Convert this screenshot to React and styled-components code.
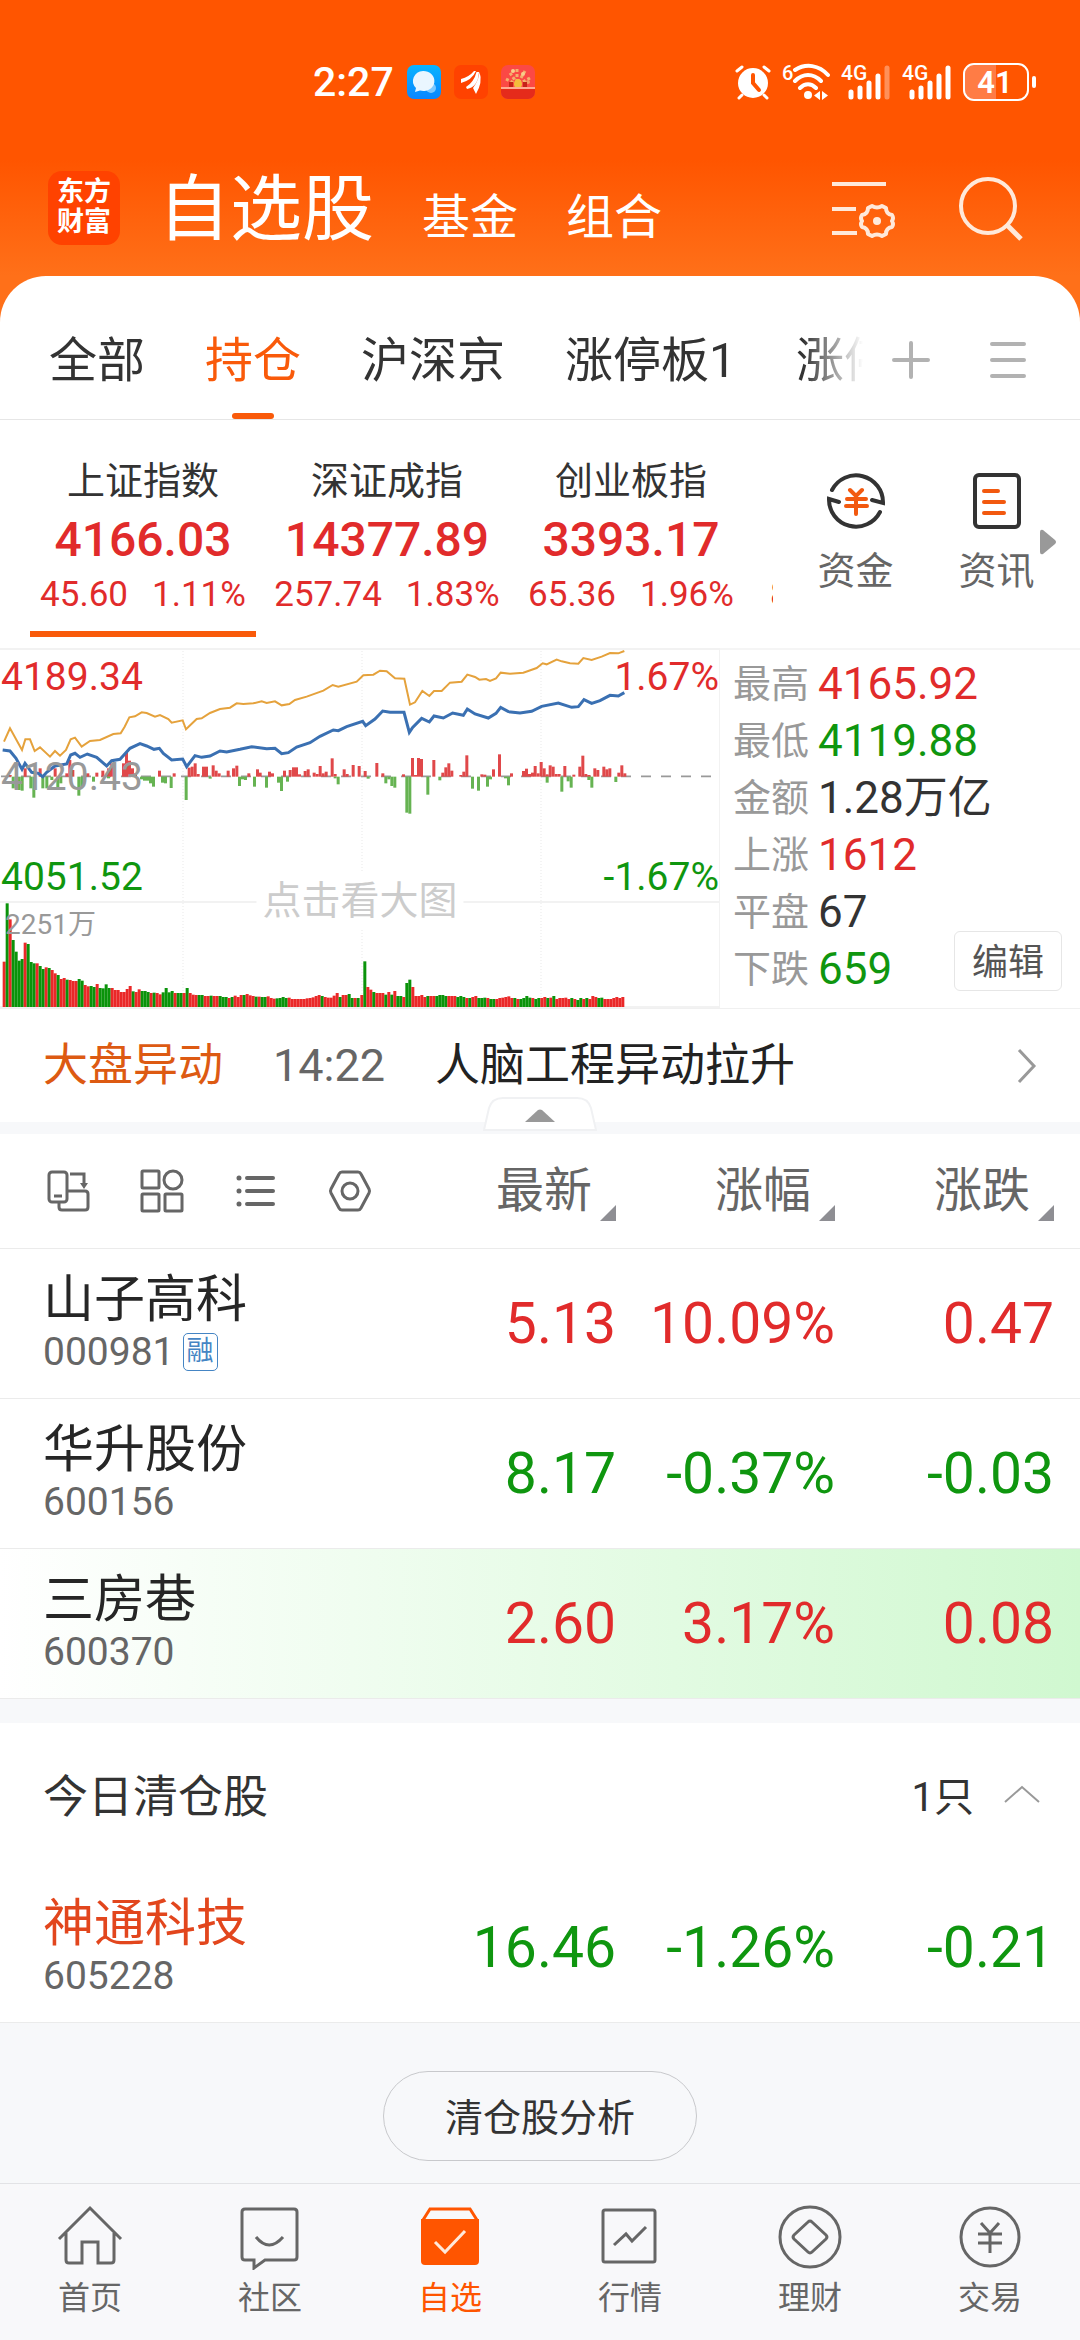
import React from "react";
import styled, { createGlobalStyle } from "styled-components";

const red = "#e12b2b";
const green = "#0f960f";
const orange = "#f95a0a";

const GlobalStyle = createGlobalStyle`
  * { box-sizing: border-box; }
  body {
    margin: 0;
    background: #f7f8fa;
    color: #333;
    font-family: Roboto, "Noto Sans CJK SC", sans-serif;
  }
  button {
    padding: 0;
    border: 0;
    background: none;
    color: inherit;
    font: inherit;
    cursor: pointer;
  }
  a { color: inherit; text-decoration: none; }
  svg { display: block; flex: none; }
`;

const tone = ({ $tone }) => ({ up: red, down: green }[$tone] || "#333");

const Page = styled.div`
  display: flex;
  flex-direction: column;
  min-height: 100vh;
`;

/* header */

const Header = styled.header`
  background: linear-gradient(#ff5500 160px, #ff7019 276px);
`;

const StatusBar = styled.div`
  display: flex;
  align-items: center;
  justify-content: space-between;
  padding: 56px 43px 0 313px;
  height: 108px;
  color: #fff;
`;

const StatusGroup = styled.div`
  display: flex;
  align-items: center;
  gap: ${({ $gap }) => $gap}px;
`;

const Clock = styled.span`
  font-size: 41px;
  font-weight: 500;
  line-height: 48px;
`;

const TitleBar = styled.div`
  display: flex;
  align-items: center;
  height: 168px;
  padding: 32px 56px 0 48px;
  color: #fff;
`;

const Logo = styled.div`
  width: 72px;
  height: 74px;
  padding: 6px 0;
  border-radius: 14px;
  background: #ff4200;
  font-size: 27px;
  font-weight: 700;
  line-height: 30px;
  text-align: center;
`;

const Titles = styled.nav`
  display: flex;
  flex: 1;
  align-items: baseline;
  gap: 48px;
  margin-left: 38px;
  padding-top: 12px;
`;

const Title = styled.a`
  font-size: ${({ $main }) => ($main ? 72 : 48)}px;
  line-height: 80px;
`;

const HeaderActions = styled.div`
  display: flex;
  gap: 62px;
`;

/* sheet */

const Sheet = styled.main`
  background: #ff7019;
`;

const Tabs = styled.nav`
  display: flex;
  align-items: center;
  height: 144px;
  padding-right: 52px;
  border-bottom: 1px solid #e6e6e6;
  border-radius: 46px 46px 0 0;
  background: #fff;
`;

const TabScroller = styled.div`
  display: flex;
  flex: 1;
  gap: 60px;
  min-width: 0;
  height: 100%;
  padding-left: 49px;
  overflow: hidden;
  mask-image: linear-gradient(to left, transparent, #000 60px);
`;

const Tab = styled.a`
  display: flex;
  flex: none;
  flex-direction: column;
  align-items: center;
  justify-content: space-between;
  padding-top: 55px;
  color: ${({ $active }) => ($active ? orange : "#333")};
  font-size: 48px;
  line-height: 60px;

  &::after {
    width: 42px;
    height: 6px;
    border-radius: 3px;
    background: ${({ $active }) => ($active ? orange : "transparent")};
    content: "";
  }
`;

const TabTools = styled.div`
  display: flex;
  flex: none;
  gap: 57px;
  padding: 24px 0 0 28px;
`;

const IndexBar = styled.section`
  display: flex;
  height: 228px;
  background: #fff;
`;

const IndexList = styled.div`
  display: flex;
  flex: 1;
  gap: 18px;
  min-width: 0;
  padding-left: 30px;
  overflow: hidden;
`;

const IndexItem = styled.button`
  display: flex;
  flex: 0 0 226px;
  flex-direction: column;
  align-items: center;
  min-width: 0;
  height: 217px;
  padding-top: 35px;
  border-bottom: 6px solid ${({ $active }) => ($active ? orange : "transparent")};
  white-space: nowrap;
`;

const IndexName = styled.span`
  font-size: 38px;
  line-height: 52px;
`;

const IndexValue = styled.span`
  color: ${tone};
  font-size: 48px;
  font-weight: 500;
  line-height: 66px;
`;

const IndexDiff = styled.span`
  display: flex;
  gap: 24px;
  color: ${tone};
  font-size: 35px;
  line-height: 44px;
`;

const NextDiff = styled(IndexDiff)`
  align-self: flex-start;
  padding: 118px 0 0 8px;
`;

const Shortcuts = styled.div`
  display: flex;
  flex: 0 0 306px;
  align-items: flex-start;
  padding: 50px 24px 0 12px;
`;

const Shortcut = styled.button`
  display: flex;
  flex: 0 0 141px;
  flex-direction: column;
  align-items: center;
  color: #666;
  font-size: 38px;
  line-height: 48px;
  gap: 15px;
`;

const More = styled.svg`
  margin: 59px 0 0 -27px;
`;

/* chart */

const Market = styled.section`
  display: grid;
  grid-template-columns: 2fr 1fr;
  border-bottom: 1px solid #f0f0f0;
  background: #fff;
`;

const ChartBox = styled.div`
  position: relative;
`;

const ChartLabel = styled.span`
  position: absolute;
  top: ${({ $top }) => $top}px;
  ${({ $side }) => $side || "left"}: 1px;
  color: ${({ $color }) => $color};
  font-size: 39px;
  line-height: 48px;
`;

const VolumeLabel = styled(ChartLabel)`
  padding-left: 4px;
  font-size: 28px;
`;

const Hint = styled.span`
  position: absolute;
  top: 225px;
  left: 50%;
  padding: 0 6px;
  background: #fff;
  color: #ccc;
  font-size: 39px;
  line-height: 56px;
  white-space: nowrap;
  transform: translateX(-50%);
`;

const Stats = styled.div`
  position: relative;
  padding: 6px 0 0 13px;
  border-top: 2px solid #f5f5f5;
`;

const StatList = styled.dl`
  margin: 0;
`;

const Stat = styled.div`
  display: flex;
  align-items: center;
  gap: 9px;
  line-height: 57px;

  dt {
    color: #999;
    font-size: 38px;
  }

  dd {
    margin: 0;
    color: ${tone};
    font-size: 44px;
  }
`;

const EditButton = styled.button`
  position: absolute;
  right: 18px;
  bottom: 17px;
  width: 108px;
  height: 60px;
  padding-bottom: 4px;
  border: 1px solid #e6e6e6;
  border-radius: 6px;
  background: #fff;
  color: #555;
  font-size: 36px;
`;

const News = styled.a`
  display: flex;
  align-items: center;
  height: 125px;
  padding: 0 43px;
  border-bottom: 12px solid #f7f8fa;
  background: #fff;
  color: #222;
  font-size: 45px;
  line-height: 60px;

  b {
    color: #dd5a12;
    font-weight: 400;
  }

  time {
    margin: 0 50px;
    color: #666;
  }

  svg {
    margin-left: auto;
  }
`;

const CollapseBar = styled.div`
  position: relative;
  display: flex;
  justify-content: center;
  height: 0;
`;

const Collapse = styled.button`
  position: absolute;
  bottom: 1px;
`;

/* watch list */

const Table = styled.table`
  width: 100%;
  border-collapse: collapse;
  background: #fff;
  table-layout: fixed;

  th, td {
    height: 150px;
    padding: 0 26px 0 0;
    border-bottom: 1px solid #ebebeb;
    font-weight: 400;
    text-align: right;
    white-space: nowrap;
  }

  th:first-child {
    padding-left: 43px;
    text-align: left;
  }

  thead th {
    height: 114px;
    color: #666;
    font-size: 48px;
    line-height: 60px;
  }
`;

const Column = styled.col`
  width: 219px;
`;

const Row = styled.tr`
  background: ${({ $hot }) => ($hot ? "linear-gradient(to right, #fff, #e8fce8 50%, #d0f8d0)" : "none")};
`;

const ViewTools = styled.div`
  display: flex;
  gap: 50px;
  padding-left: 3px;
`;

const SortButton = styled.button`
  display: inline-flex;
  align-items: flex-end;
  gap: 8px;
`;

const StockName = styled.div`
  color: ${({ $sold }) => ($sold ? "#e2461d" : "#262626")};
  font-size: 51px;
  line-height: 58px;
`;

const StockCode = styled.div`
  display: flex;
  align-items: center;
  gap: 8px;
  color: #666;
  font-size: 39px;
  line-height: 46px;
`;

const Badge = styled.span`
  width: 35px;
  height: 38px;
  border: 1px solid #4585c4;
  border-radius: 5px;
  color: #4585c4;
  font-size: 27px;
  line-height: 34px;
  text-align: center;
`;

const Num = styled.td`
  color: ${tone};
  font-size: 57px;
`;

const SoldHeader = styled.div`
  display: flex;
  align-items: center;
  justify-content: space-between;
  height: 174px;
  padding: 0 40px 8px 43px;
  border-top: 24px solid #f7f8fa;
  background: #fff;
`;

const SoldTitle = styled.h2`
  margin: 0;
  font-size: 45px;
  font-weight: 400;
`;

const Toggle = styled.button`
  display: flex;
  align-items: center;
  gap: 30px;
  font-size: 40px;
`;

const Footer = styled.div`
  display: flex;
  justify-content: center;
  padding: 48px 0 22px;
`;

const AnalyseButton = styled.button`
  width: 314px;
  height: 90px;
  padding-bottom: 4px;
  border: 1px solid #c8c9cc;
  border-radius: 45px;
  color: #333;
  font-size: 38px;
`;

const BottomNav = styled.nav`
  display: grid;
  grid-template-columns: repeat(6, 1fr);
  height: 157px;
  margin-top: auto;
  padding-top: 20px;
  border-top: 1px solid #e2e3e6;
  background: #f8f8fa;
`;

const NavItem = styled.a`
  display: flex;
  flex-direction: column;
  align-items: center;
  gap: 6px;
  color: ${({ $active }) => ($active ? "#ff5500" : "#666")};
  font-size: 32px;
  line-height: 44px;
`;

/* icons */

const MessageIcon = () => (
  <svg width="34" height="34" viewBox="0 0 34 34">
    <defs>
      <linearGradient id="msg" x2="0" y2="1">
        <stop stopColor="#08b4ff" />
        <stop offset="1" stopColor="#0a86ff" />
      </linearGradient>
    </defs>
    <rect width="34" height="34" rx="7" fill="url(#msg)" />
    <circle cx="24" cy="23" r="5" fill="#7cc8ff" />
    <path d="M16 6a11 10 0 1 1-3 19.500l-5 1.500 1-4A10.500 10 0 0 1 16 6z" fill="#eaf6ff" />
  </svg>
);

const WingIcon = () => (
  <svg width="34" height="34" viewBox="0 0 34 34">
    <rect width="34" height="34" rx="7" fill="#ff4200" />
    <path
      d="M7 14Q15 12 20 6l2 0Q18 15 7 18zM12 22Q20 17 22.500 7l2.500 0Q24 22 13 24zM19 23Q25 15 25.500 7Q29 17 22 29z"
      fill="#fff"
    />
  </svg>
);

const GiftIcon = () => (
  <svg width="34" height="34" viewBox="0 0 34 34">
    <rect width="34" height="34" rx="7" fill="#fb4945" />
    <path d="M9 8l7 10M24 6l-7 12M5 14l10 5M29 13l-11 6M16 4v12" stroke="#f3b06d" strokeWidth="3" strokeDasharray="3 2" />
    <circle cx="12" cy="6" r="2" fill="#f8cf8b" />
    <circle cx="22" cy="9" r="2" fill="#f8cf8b" />
    <circle cx="27" cy="17" r="2" fill="#f39a66" />
    <path d="M8 17h4v6H8zM22 17h4v6h-4z" fill="#c52318" />
    <ellipse cx="17" cy="19" rx="4" ry="5" fill="#f4bd3c" />
    <path d="M0 23h34v4a7 7 0 0 1-7 7H7a7 7 0 0 1-7-7z" fill="#e52b1b" />
    <path d="M0 22h34v2H0z" fill="#ffab91" />
  </svg>
);

const AlarmIcon = () => (
  <svg width="36" height="36" viewBox="0 0 36 36" fill="none" stroke="#fff" strokeLinecap="round">
    <circle cx="18" cy="19" r="15" fill="#fff" stroke="none" />
    <path d="M2 7l5-4M34 7l-5-4M7 31l-3 3M29 31l3 3" strokeWidth="3" />
    <path d="M18 11v8l6 7" stroke="#ff5500" strokeWidth="4" />
  </svg>
);

const WifiIcon = () => (
  <svg width="48" height="38" viewBox="0 0 48 38" fill="none" stroke="#fff" strokeWidth="4" strokeLinecap="round">
    <text x="0" y="17" fill="#fff" stroke="none" fontSize="20" fontWeight="500">6</text>
    <path d="M13 7c11-7 24-5 33 5M13 18c8-8 18-8 26 0M18 25c5-5 11-5 16 0" />
    <circle cx="26" cy="32" r="4" fill="#fff" stroke="none" />
    <path d="M38 28v9l-6-4.500zM40 28v9l6-4.500z" fill="#fff" stroke="none" />
  </svg>
);

const SignalIcon = ({ level }) => (
  <svg width="50" height="38" viewBox="0 0 50 38" stroke="#fff" strokeWidth="5" strokeLinecap="round">
    <text x="0" y="17" fill="#fff" stroke="none" fontSize="21" fontWeight="500">4G</text>
    {[29, 25, 20, 13, 5].map((y, i) => (
      <path key={y} d={`M${10 + i * 9} ${y}V34`} opacity={i < level ? 1 : 0.35} />
    ))}
  </svg>
);

const BatteryIcon = () => (
  <svg width="74" height="38" viewBox="0 0 74 38">
    <path d="M11 2h22v34H11a9 9 0 0 1-9-9V11a9 9 0 0 1 9-9z" fill="#ff7c45" />
    <rect x="1" y="1" width="64" height="36" rx="10" fill="none" stroke="#fff" strokeWidth="2" />
    <path d="M71 15v8" stroke="#fff" strokeWidth="4" strokeLinecap="round" />
    <text x="32" y="30" fill="#fff" fontSize="31" fontWeight="600" textAnchor="middle">41</text>
  </svg>
);

const ListSettingIcon = () => (
  <svg width="64" height="64" viewBox="0 0 64 64" fill="none" stroke="#ffe9da" strokeWidth="4">
    <path d="M0 8h54M0 33h24M0 57h25" />
    <path
      d="M40 30q5 3 10 0l4 2q0 6 6 7q2 3 0 6q2 3 0 6q-6 1-6 7l-4 2q-5-3-10 0l-4-2q0-6-6-7q-2-3 0-6q-2-3 0-6q6-1 6-7z"
      strokeLinejoin="round"
    />
    <circle cx="45" cy="45" r="4" fill="#ffe9da" stroke="none" />
  </svg>
);

const SearchIcon = () => (
  <svg width="66" height="66" viewBox="0 0 66 66" fill="none" stroke="#ffe9da" strokeWidth="4">
    <circle cx="30" cy="31" r="27" />
    <path d="M49 50l14 14" strokeWidth="5" />
  </svg>
);

const PlusIcon = () => (
  <svg width="40" height="40" viewBox="0 0 40 40" stroke="#b2b2b2" strokeWidth="4" strokeLinecap="round">
    <path d="M3 20h34M20 3v34" />
  </svg>
);

const MenuIcon = () => (
  <svg width="40" height="40" viewBox="0 0 40 40" stroke="#b2b2b2" strokeWidth="4" strokeLinecap="round">
    <path d="M4 4h32M4 20h32M4 36h32" />
  </svg>
);

const FundIcon = () => (
  <svg width="62" height="62" viewBox="0 0 62 62" fill="none" stroke="#333" strokeWidth="4" strokeLinecap="round">
    <path d="M7 20a27 27 0 0 1 51 13l-11-3M55 42A27 27 0 0 1 4 29l10 3" />
    <path d="M25 20l6 6 6-6M22 29h19M21 36h21M31 27v17" stroke="#f2590f" />
  </svg>
);

const InfoIcon = () => (
  <svg width="62" height="62" viewBox="0 0 62 62" fill="none" stroke="#333" strokeWidth="4" strokeLinecap="round">
    <rect x="9" y="5" width="44" height="52" rx="4" />
    <path d="M18 21h14M18 32h20M18 43h20" stroke="#f2590f" />
  </svg>
);

const SwapIcon = () => (
  <svg width="44" height="44" viewBox="0 0 44 44" fill="none" stroke="#666" strokeWidth="3">
    <rect x="3" y="3" width="18" height="30" rx="3" />
    <path d="M8 27h8M24 5h14v10M13 34v4q0 3 3 3h23q3 0 3-3V25q0-3-3-3H21" />
    <path d="M34 14h8l-4 6z" fill="#666" stroke="none" />
  </svg>
);

const GridIcon = () => (
  <svg width="44" height="44" viewBox="0 0 44 44" fill="none" stroke="#666" strokeWidth="3">
    <rect x="2" y="2" width="17" height="17" rx="1" />
    <circle cx="33" cy="11" r="9" />
    <rect x="2" y="25" width="17" height="17" rx="1" />
    <rect x="25" y="25" width="17" height="17" rx="1" />
  </svg>
);

const BulletsIcon = () => (
  <svg width="44" height="44" viewBox="0 0 44 44" fill="none" stroke="#666" strokeWidth="4" strokeLinecap="round">
    <path d="M13 9h26M13 22h26M13 35h26" />
    <path d="M5 9h0M5 22h0M5 35h0" strokeWidth="5" />
  </svg>
);

const HexIcon = () => (
  <svg width="44" height="44" viewBox="0 0 44 44" fill="none" stroke="#666" strokeWidth="3">
    <path d="M14 3h16q2 0 3 2l8 15q1 2 0 4l-8 15q-1 2-3 2H14q-2 0-3-2L3 24q-1-2 0-4l8-15q1-2 3-2z" />
    <circle cx="22" cy="22" r="8" />
  </svg>
);

const SortIcon = () => (
  <svg width="16" height="16" viewBox="0 0 16 16">
    <path d="M16 0v16H0z" fill="#8e8e93" />
  </svg>
);

const navIcons = {
  home: <path d="M2 35L33 4l31 31M9 29v27q0 3 3 3h13V38h16v21h13q3 0 3-3V29" />,
  chat: (
    <>
      <path d="M8 5h49q3 0 3 3v45q0 3-3 3H28l-11 8v-8H8q-3 0-3-3V8q0-3 3-3z" />
      <path d="M19 33q13 16 27 0" />
    </>
  ),
  box: (
    <>
      <path d="M6 16l7-11h40l7 11" />
      <path d="M4 15h58v42q0 4-4 4H8q-4 0-4-4z" fill="#ff5500" stroke="none" />
      <path d="M18 38l10 10 20-21" stroke="#ffe9da" />
    </>
  ),
  trend: (
    <>
      <rect x="6" y="6" width="52" height="52" rx="2" />
      <path d="M17 41l12-11 6 7 14-14" />
    </>
  ),
  wealth: (
    <>
      <circle cx="33" cy="33" r="30" />
      <path d="M31 18q2-2 4 0l14 13q2 2 0 4L35 48q-2 2-4 0L17 35q-2-2 0-4z" />
    </>
  ),
  trade: (
    <>
      <circle cx="33" cy="33" r="29" />
      <path d="M24 19l9 10 9-10M21 30h24M21 39h24M33 29v20" />
    </>
  ),
};

/* intraday drawing, three units to a pixel */

const averageLine =
  "12,305 30,265 66,330 76,298 90,298 104,333 120,322 150,350 165,333 180,347 198,330 212,298 225,293 245,320 270,303 300,300 340,282 362,280 374,260 388,232 405,229 425,217 440,219 465,230 480,225 505,237 515,248 548,241 558,268 590,237 605,235 630,219 660,207 690,203 710,190 730,192 760,190 785,184 800,189 825,184 845,196 868,192 885,180 920,170 970,152 998,135 1015,140 1070,125 1090,106 1120,104 1140,92 1160,94 1185,115 1213,116 1230,194 1245,187 1267,153 1288,168 1302,153 1325,153 1350,128 1385,125 1402,104 1425,111 1438,119 1458,117 1470,123 1488,115 1502,98 1530,101 1570,98 1610,84 1628,70 1640,73 1670,59 1685,64 1710,70 1735,71 1750,54 1775,60 1805,50 1830,39 1855,40 1873,33";

const priceLine =
  "8,330 30,333 48,355 66,388 75,370 95,397 115,400 128,410 140,397 165,378 200,372 212,345 225,340 240,352 262,342 290,352 320,378 335,362 360,358 390,325 420,311 440,318 462,328 478,325 490,340 515,360 548,357 560,380 585,347 605,352 630,348 660,333 680,336 720,328 755,320 800,326 825,325 845,341 865,338 890,321 930,308 960,289 1000,270 1015,272 1040,260 1088,244 1097,257 1125,237 1148,213 1170,217 1212,217 1228,277 1238,262 1265,235 1288,246 1302,228 1330,234 1358,219 1390,226 1402,207 1425,222 1465,234 1488,220 1502,202 1525,215 1560,219 1595,214 1625,199 1675,189 1715,202 1735,200 1752,179 1775,190 1800,182 1830,166 1855,168 1873,158";

const rises =
  "30,405 75,385 120,385 165,385 200,400 209,360 218,390 263,400 290,398 308,392 325,385 334,370 370,370 379,337 388,362 397,385 406,400 478,392 522,400 567,383 576,380 585,370 594,402 610,380 619,380 639,376 648,392 657,400 684,392 700,385 710,377 746,400 772,388 780,398 808,395 817,400 853,392 870,390 880,382 889,382 898,403 915,393 924,388 942,398 951,402 960,378 969,400 978,395 996,355 1005,402 1032,388 1041,402 1059,375 1077,378 1095,393 1130,369 1148,400 1210,403 1237,354 1246,405 1255,354 1264,357 1301,360 1328,398 1337,382 1346,370 1355,392 1382,405 1391,395 1400,346 1445,403 1454,404 1480,388 1498,343 1534,400 1570,393 1579,386 1588,402 1597,398 1605,378 1614,400 1623,366 1632,385 1641,403 1650,376 1659,380 1668,402 1677,402 1694,378 1721,404 1739,380 1748,347 1757,402 1766,405 1784,385 1793,390 1811,380 1820,388 1829,385 1856,398 1865,376 1874,400";

const falls =
  "39,445 48,445 57,450 66,452 92,445 101,473 128,445 140,445 155,420 173,443 182,430 236,467 245,440 280,425 325,415 424,418 433,422 442,422 451,430 460,440 487,428 496,430 513,444 558,480 630,416 718,438 727,418 736,420 763,440 799,443 835,428 844,453 862,425 1005,415 1014,433 1104,416 1157,430 1166,418 1175,438 1184,443 1220,518 1229,521 1283,464 1319,421 1417,446 1435,452 1462,440 1471,418 1516,415 1525,436 1641,428 1685,455 1704,424 1713,443 1766,420 1775,443 1847,426";

const volumes = [
  [
    12,
    "136r 311g 263r 201g 166g 139g 144g 193r 189g 135g 131g 131r 123g 114g 119r 117g 111r 101r 96g 84r 87r 82g 81r 78r 78r 84g 79g 66r 62r 63g 60g 69r 57g 56g 68g 57g 57r 51r 51r 45r 45r 54r 63r 47g 45r 53r 48g 48g 45g 42r 43g 42r 38r 44g 57g 44g 48g 42r 42g 42g 42r 57g 42r 37r 36r 36g 36g 33r 33r 34g 33r 33r 33g 30g 30g 27r 30g 34r 30r 36r 36g 39r 35r 33r 31g 31r 30g 30g 32r 27r 25r 26g 27g 30g 27g 28r 24r 24r 24r 24r 24r 26r 27r 29r 33r 36r 33g 30r 28r 28r 34r 42r 30g 36r 36r 39g 27g 27r 27g",
  ],
  [
    1085,
    "36r 137g 60r 52r 45g 42r 42r 42r 37g 45r 37g 48r 33g 33g 30r 72g 82g 60r 33r 33r 36r 30r 33g 33r 33r 33g 36g 36g 33g 33r 33r 33r 30g 33g 30g 27r 27g 30r 33r 27g 27g 28g 27r 24g 24g 24r 27r 28r 30r 32r 27r 27g 24r 24g 27g 33g 28g 27r 24g 27g 27r 30r 27g 28r 33g 24r 27r 27r 28r 24r 27g 24r 21g 27g 24r 27g 24r 33r 30r 27g 28g 24r 24r 24r 27r 30r 27r 30r",
  ],
];

const points = (text) => text.split(" ").map((pair) => pair.split(",").map(Number));

const Chart = () => (
  <svg width="100%" viewBox="0 24 2160 1080" role="img" aria-label="上证指数分时图">
    <path d="M0 27H2160M0 786H2160M2160 27V1101M0 1101H2160" stroke="#f2f2f2" strokeWidth="6" fill="none" />
    <path d="M549 33V1101M1086 33V1101M1623 33V1101" stroke="#efefef" strokeWidth="4" strokeDasharray="3 6" />
    <path d="M3 409H2160" stroke="#999" strokeWidth="5" strokeDasharray="30 30" />
    {points(rises).map(([x, y]) => (
      <rect key={x} x={x - 4} y={y} width="9" height={410 - y} fill="#e0484a" />
    ))}
    {points(falls).map(([x, y]) => (
      <rect key={x} x={x - 4} y="410" width="9" height={y - 410} fill="#66b352" />
    ))}
    {volumes.map(([start, bars]) =>
      bars.split(" ").map((bar, i) => {
        const height = parseInt(bar, 10);
        return (
          <rect
            key={`${start}-${i}`}
            x={start - 4 + i * 9}
            y={1101 - height}
            width="9"
            height={height}
            fill={bar.endsWith("r") ? "#ea2828" : "#0a930a"}
          />
        );
      })
    )}
    <polyline points={averageLine} fill="none" stroke="#e5a23c" strokeWidth="6" />
    <polyline points={priceLine} fill="none" stroke="#3a70b2" strokeWidth="9" />
  </svg>
);

/* data */

const tabs = ["全部", "持仓", "沪深京", "涨停板1", "涨停板2"];

const indexes = [
  { name: "上证指数", value: "4166.03", diff: "45.60", rate: "1.11%" },
  { name: "深证成指", value: "14377.89", diff: "257.74", rate: "1.83%" },
  { name: "创业板指", value: "3393.17", diff: "65.36", rate: "1.96%" },
];

const stats = [
  ["最高", "4165.92", "up"],
  ["最低", "4119.88", "down"],
  ["金额", "1.28万亿"],
  ["上涨", "1612", "up"],
  ["平盘", "67"],
  ["下跌", "659", "down"],
];

const holdings = [
  { name: "山子高科", code: "000981", price: "5.13", rate: "10.09%", diff: "0.47", tone: "up", margin: true },
  { name: "华升股份", code: "600156", price: "8.17", rate: "-0.37%", diff: "-0.03", tone: "down" },
  { name: "三房巷", code: "600370", price: "2.60", rate: "3.17%", diff: "0.08", tone: "up", hot: true },
];

const soldStocks = [
  { name: "神通科技", code: "605228", price: "16.46", rate: "-1.26%", diff: "-0.21", tone: "down", sold: true },
];

const navItems = [
  ["首页", "home"],
  ["社区", "chat"],
  ["自选", "box"],
  ["行情", "trend"],
  ["理财", "wealth"],
  ["交易", "trade"],
];

const Columns = () => (
  <colgroup>
    <col />
    <Column />
    <Column />
    <Column />
  </colgroup>
);

const StockRow = ({ stock }) => (
  <Row $hot={stock.hot}>
    <th scope="row">
      <StockName $sold={stock.sold}>{stock.name}</StockName>
      <StockCode>
        {stock.code}
        {stock.margin && <Badge>融</Badge>}
      </StockCode>
    </th>
    <Num $tone={stock.tone}>{stock.price}</Num>
    <Num $tone={stock.tone}>{stock.rate}</Num>
    <Num $tone={stock.tone}>{stock.diff}</Num>
  </Row>
);

export default function App() {
  return (
    <Page>
      <GlobalStyle />
      <Header>
        <StatusBar>
          <StatusGroup $gap={13}>
            <Clock>2:27</Clock>
            <MessageIcon />
            <WingIcon />
            <GiftIcon />
          </StatusGroup>
          <StatusGroup $gap={11}>
            <AlarmIcon />
            <WifiIcon />
            <SignalIcon level={4} />
            <SignalIcon level={5} />
            <BatteryIcon />
          </StatusGroup>
        </StatusBar>
        <TitleBar>
          <Logo>
            东方
            <br />
            财富
          </Logo>
          <Titles>
            <Title href="#stocks" $main>自选股</Title>
            <Title href="#funds">基金</Title>
            <Title href="#groups">组合</Title>
          </Titles>
          <HeaderActions>
            <button aria-label="设置">
              <ListSettingIcon />
            </button>
            <button aria-label="搜索">
              <SearchIcon />
            </button>
          </HeaderActions>
        </TitleBar>
      </Header>

      <Sheet>
        <Tabs>
          <TabScroller>
            {tabs.map((tab) => (
              <Tab key={tab} href={`#${tab}`} $active={tab === "持仓"}>
                {tab}
              </Tab>
            ))}
          </TabScroller>
          <TabTools>
            <button aria-label="添加">
              <PlusIcon />
            </button>
            <button aria-label="菜单">
              <MenuIcon />
            </button>
          </TabTools>
        </Tabs>

        <IndexBar>
          <IndexList>
            {indexes.map((item, i) => (
              <IndexItem key={item.name} $active={i === 0}>
                <IndexName>{item.name}</IndexName>
                <IndexValue $tone="up">{item.value}</IndexValue>
                <IndexDiff $tone="up">
                  <span>{item.diff}</span>
                  <span>{item.rate}</span>
                </IndexDiff>
              </IndexItem>
            ))}
            <IndexItem>
              <NextDiff $tone="up">8</NextDiff>
            </IndexItem>
          </IndexList>
          <Shortcuts>
            <Shortcut>
              <FundIcon />
              资金
            </Shortcut>
            <Shortcut>
              <InfoIcon />
              资讯
            </Shortcut>
            <More width="16" height="26" viewBox="0 0 16 26">
              <path d="M0 3q0-3 3-2l12 10q2 2 0 4L3 25q-3 1-3-2z" fill="#999" />
            </More>
          </Shortcuts>
        </IndexBar>

        <Market>
          <ChartBox>
            <Chart />
            <ChartLabel $top={5} $color={red}>4189.34</ChartLabel>
            <ChartLabel $top={105} $color="#999">4120.43</ChartLabel>
            <ChartLabel $top={205} $color={green}>4051.52</ChartLabel>
            <ChartLabel $top={5} $side="right" $color={red}>1.67%</ChartLabel>
            <ChartLabel $top={205} $side="right" $color={green}>-1.67%</ChartLabel>
            <VolumeLabel $top={253} $color="#999">2251万</VolumeLabel>
            <Hint>点击看大图</Hint>
          </ChartBox>
          <Stats>
            <StatList>
              {stats.map(([label, value, dir]) => (
                <Stat key={label} $tone={dir}>
                  <dt>{label}</dt>
                  <dd>{value}</dd>
                </Stat>
              ))}
            </StatList>
            <EditButton>编辑</EditButton>
          </Stats>
        </Market>

        <News href="#news">
          <b>大盘异动</b>
          <time>14:22</time>
          人脑工程异动拉升
          <svg width="20" height="36" viewBox="0 0 20 36" fill="none" stroke="#999" strokeWidth="3">
            <path d="M2 2l15 16L2 34" />
          </svg>
        </News>
        <CollapseBar>
          <Collapse aria-label="收起">
            <svg width="114" height="36" viewBox="0 0 114 36">
              <path d="M1 33l5-22Q9 1 20 1h74q11 0 14 10l5 22z" fill="#fff" stroke="#f0f1f3" strokeWidth="2" />
              <path d="M42 25l13-12q2-1 4 0l13 12z" fill="#999" />
            </svg>
          </Collapse>
        </CollapseBar>

        <Table>
          <Columns />
          <thead>
            <tr>
              <th>
                <ViewTools>
                  <button aria-label="横屏"><SwapIcon /></button>
                  <button aria-label="宫格"><GridIcon /></button>
                  <button aria-label="列表"><BulletsIcon /></button>
                  <button aria-label="表头设置"><HexIcon /></button>
                </ViewTools>
              </th>
              {["最新", "涨幅", "涨跌"].map((label) => (
                <th key={label} scope="col">
                  <SortButton>
                    {label}
                    <SortIcon />
                  </SortButton>
                </th>
              ))}
            </tr>
          </thead>
          <tbody>
            {holdings.map((stock) => (
              <StockRow key={stock.code} stock={stock} />
            ))}
          </tbody>
        </Table>

        <SoldHeader>
          <SoldTitle>今日清仓股</SoldTitle>
          <Toggle>
            1只
            <svg width="36" height="20" viewBox="0 0 36 20" fill="none" stroke="#999" strokeWidth="2">
              <path d="M1 18L18 3l17 15" />
            </svg>
          </Toggle>
        </SoldHeader>
        <Table>
          <Columns />
          <tbody>
            {soldStocks.map((stock) => (
              <StockRow key={stock.code} stock={stock} />
            ))}
          </tbody>
        </Table>
      </Sheet>

      <Footer>
        <AnalyseButton>清仓股分析</AnalyseButton>
      </Footer>

      <BottomNav>
        {navItems.map(([label, icon]) => (
          <NavItem key={label} href={`#${icon}`} $active={icon === "box"}>
            <svg width="66" height="66" viewBox="0 0 66 66" fill="none" stroke="currentColor" strokeWidth="3">
              {navIcons[icon]}
            </svg>
            {label}
          </NavItem>
        ))}
      </BottomNav>
    </Page>
  );
}
